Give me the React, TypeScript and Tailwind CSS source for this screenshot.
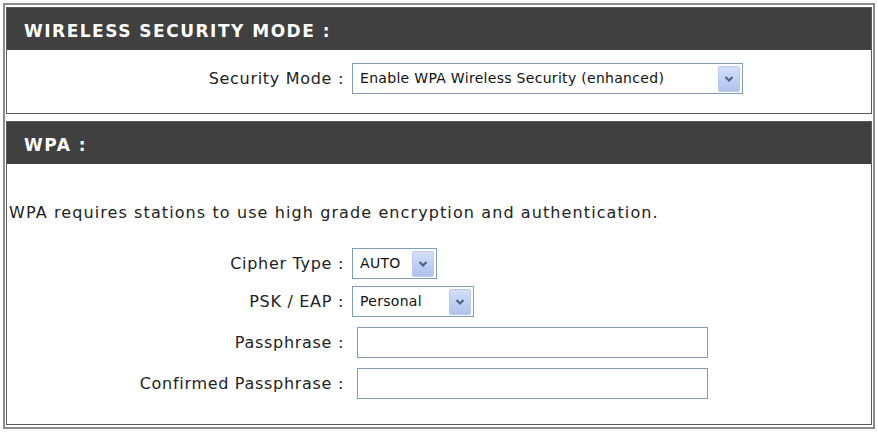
import React from 'react';

const body = "font-['DejaVu_Sans',sans-serif]";

function Arrow() {
  return (
    <span className="flex h-[26px] w-[22px] items-center justify-center rounded-[2px] border border-[#b9c9ee] bg-gradient-to-b from-[#d3dffa] to-[#b0c2eb]">
      <svg width="10" height="8" viewBox="0 0 10 8">
        <path d="M1.5 2 L5 5.5 L8.5 2" stroke="#4d6185" strokeWidth="2.2" fill="none" />
      </svg>
    </span>
  );
}

function Select({ value, className }: { value: string; className: string }) {
  return (
    <div className={'flex h-[31px] items-center border border-[#7f9db9] bg-white pr-[2px] ' + className}>
      <span className="flex-1 truncate pl-[7px] text-[14px] tracking-[0.3px] text-[#111]">{value}</span>
      <Arrow />
    </div>
  );
}

function Row({ label, children, className }: { label: string; children: React.ReactNode; className?: string }) {
  return (
    <div className={'flex items-center ' + (className ?? '')}>
      <div className="w-[345px] pr-[8px] text-right text-[16px] tracking-[0.7px] text-[#222]">{label}</div>
      {children}
    </div>
  );
}

function Header({ title }: { title: string }) {
  return (
    <div className="flex h-[42px] items-center bg-[#404040] pl-[17px] pt-[6px] font-['DejaVu_Sans',sans-serif] text-[17px] font-bold tracking-[1.5px] text-white">
      {title}
    </div>
  );
}

export default function App() {
  return (
    <div className={'h-[434px] w-[878px] bg-white p-[3px] ' + body}>
      <div className="flex h-[426px] w-[872px] flex-col border-2 border-[#8c8c8c] pb-[2px] pl-[1px] pr-[1px] pt-[2px]">
        <div className="border border-[#5a5a5a]">
          <Header title="WIRELESS SECURITY MODE :" />
          <div className="pb-[19px] pt-[13px]">
            <Row label="Security Mode :">
              <Select value="Enable WPA Wireless Security (enhanced)" className="w-[391px]" />
            </Row>
          </div>
        </div>
        <div className="mt-[7px] flex-1 border border-[#5a5a5a]">
          <Header title="WPA :" />
          <p className="mt-[39px] pl-[2px] text-[16px] leading-[20px] tracking-[1.1px] text-[#222]">
            WPA requires stations to use high grade encryption and authentication.
          </p>
          <Row label="Cipher Type :" className="mt-[25px]">
            <Select value="AUTO" className="w-[85px]" />
          </Row>
          <Row label="PSK / EAP :" className="mt-[7px]">
            <Select value="Personal" className="w-[122px]" />
          </Row>
          <Row label="Passphrase :" className="mt-[10px]">
            <div className="ml-[5px] h-[31px] w-[351px] border border-[#7f9db9] bg-white" />
          </Row>
          <Row label="Confirmed Passphrase :" className="mt-[10px]">
            <div className="ml-[5px] h-[31px] w-[351px] border border-[#7f9db9] bg-white" />
          </Row>
        </div>
      </div>
    </div>
  );
}
